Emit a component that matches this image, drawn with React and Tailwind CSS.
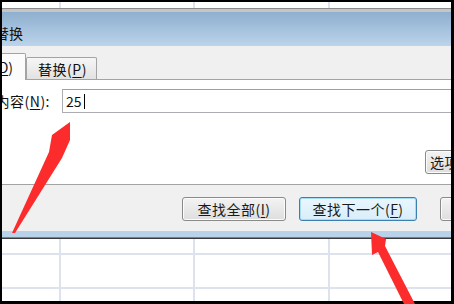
import React from 'react';

const font = "font-['Noto_Sans_CJK_SC','Noto_Sans',sans-serif]";

function GridRow({ className = '' }) {
  return (
    <div className={`flex ${className}`}>
      <div className="w-[59px] shrink-0 border-r-2 border-[#dde3ee]" />
      <div className="w-[134px] shrink-0 border-r-2 border-[#dde3ee]" />
      <div className="w-[135px] shrink-0 border-r-2 border-[#dde3ee]" />
      <div className="flex-1" />
    </div>
  );
}

function Hot({ children }) {
  return <span className="underline underline-offset-2">{children}</span>;
}

function Button({ children, focused, className = '' }) {
  return (
    <div
      className={`flex h-[24px] shrink-0 items-center justify-center whitespace-nowrap rounded-[3px] border text-[14px] leading-none tracking-[0.5px] text-[#1a1a1a] ${
        focused
          ? 'border-[#3c7fb1] bg-gradient-to-b from-[#eaf6fd] to-[#d9eefa] shadow-[inset_0_0_0_1px_#a6dbf5]'
          : 'border-[#8a8a8a] bg-gradient-to-b from-[#f3f3f3] to-[#dedede] shadow-[inset_0_0_0_1px_#fbfbfb]'
      } ${className}`}
    >
      {children}
    </div>
  );
}

export default function App() {
  return (
    <div className={`relative h-[304px] w-[454px] overflow-hidden bg-black pb-[3px] pl-[2px] pr-[3px] pt-[2px] ${font}`}>
      <div className="flex h-full flex-col overflow-hidden bg-white">
        {/* sheet behind, top */}
        <GridRow className="h-[6px] shrink-0" />
        <div className="h-[4px] shrink-0 border-t border-[#8a8a8a] bg-[#c6c6c6]" />

        {/* title bar */}
        <div className="flex h-[34px] shrink-0 items-center overflow-hidden bg-gradient-to-b from-[#8eafcf] to-[#bcd4eb] pt-[8px]">
          <span className="ml-[-7px] shrink-0 whitespace-nowrap text-[14px] leading-none text-[#111]">替换</span>
        </div>

        {/* tabs */}
        <div className="flex h-[34px] shrink-0 items-end border-b border-[#a3a3a3] bg-[#f0f0f0]">
          <div className="mb-[-1px] flex h-[27px] w-[24px] shrink-0 items-center justify-end overflow-visible rounded-tr-[2px] border-r border-t border-[#a3a3a3] bg-[#fbfbfb] pr-[12px]">
            <span className="whitespace-nowrap text-[14px] leading-none text-[#111]">
              查找(<Hot>D</Hot>)
            </span>
          </div>
          <div className="flex h-[22px] w-[71px] shrink-0 items-center justify-center rounded-t-[2px] border border-b-0 border-[#a3a3a3] bg-gradient-to-b from-[#f6f6f6] to-[#e2e2e2] pl-[2px]">
            <span className="whitespace-nowrap text-[14px] leading-none tracking-[0.5px] text-[#111]">
              替换(<Hot>P</Hot>)
            </span>
          </div>
        </div>

        {/* panel */}
        <div className="flex h-[105px] shrink-0 flex-col border-b border-[#a3a3a3] bg-white">
          <div className="mt-[9px] flex h-[24px] items-center">
            <div className="flex w-[48px] shrink-0 justify-end">
              <span className="whitespace-nowrap text-[14px] leading-none tracking-[0.5px] text-[#111]">
                查找内容(<Hot>N</Hot>):
              </span>
            </div>
            <div className="ml-[12px] flex h-[24px] flex-1 items-center border border-r-0 border-[#abadb3] border-t-[#9aa0aa] pl-[3px]">
              <span className="text-[14px] leading-none text-[#111]">25</span>
              <span className="ml-[2px] h-[15px] w-[1px] bg-black" />
            </div>
          </div>
          <div className="mt-[37px] flex">
            <Button className="ml-[423px] w-[80px] justify-start pl-[4px]">
              选项(<Hot>T</Hot>) &gt;&gt;
            </Button>
          </div>
        </div>

        {/* buttons */}
        <div className="flex h-[46px] shrink-0 bg-[#f0f0f0] pt-[12px]">
          <Button className="ml-[180px] w-[104px]">
            查找全部(<Hot>I</Hot>)
          </Button>
          <Button focused className="ml-[13px] w-[118px]">
            查找下一个(<Hot>F</Hot>)
          </Button>
          <Button className="ml-[23px] w-[80px]">关闭</Button>
        </div>

        <div className="h-[6px] shrink-0 bg-[#b8d2ea]" />
        <div className="h-[1px] shrink-0 bg-[#2da0b4]" />
        <div className="h-[1px] shrink-0 bg-[#3a3a3a]" />

        {/* sheet behind, bottom */}
        <div className="flex flex-1 flex-col">
          <GridRow className="h-[16px] shrink-0 border-b-2 border-[#dde3ee]" />
          <GridRow className="h-[34px] shrink-0 border-b-2 border-[#dde3ee]" />
          <GridRow className="flex-1" />
        </div>
      </div>

      {/* annotation arrows */}
      <svg className="pointer-events-none absolute left-0 top-0" width="454" height="304" viewBox="0 0 454 304">
        <polygon points="12,233 49,152 52,135 70,122 70,140 62,158 15,233" fill="#fc2c2c" />
        <polygon points="371,232 386,239 385,246 415,304 404,304 378,252 372,255" fill="#fc2c2c" />
      </svg>
    </div>
  );
}
